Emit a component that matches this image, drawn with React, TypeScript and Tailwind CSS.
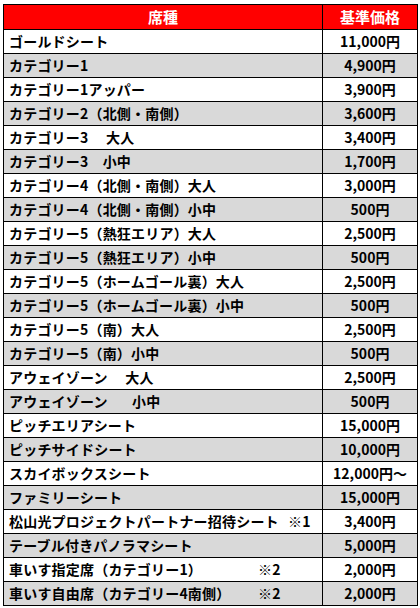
type Row = {
  name: string;
  note?: string;
  noteAt?: string;
  price: string;
};

const rows: Row[] = [
  { name: "ゴールドシート", price: "11,000円" },
  { name: "カテゴリー1", price: "4,900円" },
  { name: "カテゴリー1アッパー", price: "3,900円" },
  { name: "カテゴリー2（北側・南側）", price: "3,600円" },
  { name: "カテゴリー3　 大人", price: "3,400円" },
  { name: "カテゴリー3　小中", price: "1,700円" },
  { name: "カテゴリー4（北側・南側）大人", price: "3,000円" },
  { name: "カテゴリー4（北側・南側）小中", price: "500円" },
  { name: "カテゴリー5（熱狂エリア）大人", price: "2,500円" },
  { name: "カテゴリー5（熱狂エリア）小中", price: "500円" },
  { name: "カテゴリー5（ホームゴール裏）大人", price: "2,500円" },
  { name: "カテゴリー5（ホームゴール裏）小中", price: "500円" },
  { name: "カテゴリー5（南）大人", price: "2,500円" },
  { name: "カテゴリー5（南）小中", price: "500円" },
  { name: "アウェイゾーン　 大人", price: "2,500円" },
  { name: "アウェイゾーン　   小中", price: "500円" },
  { name: "ピッチエリアシート", price: "15,000円" },
  { name: "ピッチサイドシート", price: "10,000円" },
  { name: "スカイボックスシート", price: "12,000円～" },
  { name: "ファミリーシート", price: "15,000円" },
  { name: "松山光プロジェクトパートナー招待シート", note: "※1", noteAt: "w-[279px]", price: "3,400円" },
  { name: "テーブル付きパノラマシート", price: "5,000円" },
  { name: "車いす指定席（カテゴリー1）", note: "※2", noteAt: "w-[249px]", price: "2,000円" },
  { name: "車いす自由席（カテゴリー4南側）", note: "※2", noteAt: "w-[249px]", price: "2,000円" },
];

export default function App() {
  return (
    <main
      className="min-h-screen bg-white pt-[4px] pl-[3px] text-[14px] font-bold text-black"
      style={{ fontFamily: '"Noto Sans CJK JP", "Noto Sans", sans-serif' }}
    >
      <div className="w-[415px] border-t border-l border-r border-black">
        <div className="flex h-[25px] border-b border-black bg-[#ff0000] text-[15px] text-white">
          <div className="flex w-[319px] items-center justify-center border-r border-black">席種</div>
          <div className="flex flex-1 items-center justify-center">基準価格</div>
        </div>

        {rows.map((r, i) => (
          <div
            key={i}
            className={`flex h-[24px] border-b border-black ${i % 2 === 1 ? "bg-[#d9d9d9]" : "bg-white"}`}
          >
            <div className="flex w-[319px] items-center whitespace-pre border-r border-black pl-[5px] tracking-[0.2px]">
              {r.note ? (
                <>
                  <span className={`inline-block ${r.noteAt}`}>{r.name}</span>
                  <span>{r.note}</span>
                </>
              ) : (
                r.name
              )}
            </div>
            <div className="flex flex-1 items-center justify-center">{r.price}</div>
          </div>
        ))}
      </div>
    </main>
  );
}
